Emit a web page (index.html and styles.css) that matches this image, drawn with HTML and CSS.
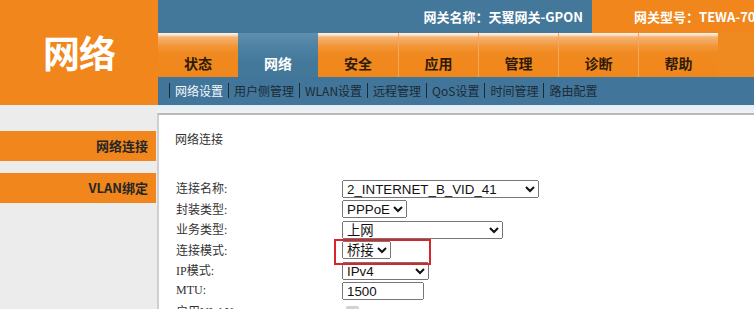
FILE: index.html
```html
<!DOCTYPE html>
<html lang="zh-CN">
<head>
    <meta charset="UTF-8">
    <meta name="viewport" content="width=device-width, initial-scale=1.0">
    <title>网络连接</title>
    <link rel="stylesheet" href="styles.css">
</head>
<body>
    <div class="header">
        <div class="logo">网络</div>
        <div class="head-main">
            <div class="top-bar">
                <div class="gw-name">网关名称：天翼网关-GPON</div>
                <div class="gw-model">网关型号：TEWA-708G</div>
            </div>
            <div class="tab-row">
                <div class="tabs">
                    <div class="tab">状态</div>
                    <div class="tab active">网络</div>
                    <div class="tab">安全</div>
                    <div class="tab">应用</div>
                    <div class="tab">管理</div>
                    <div class="tab">诊断</div>
                    <div class="tab">帮助</div>
                </div>
                <div class="tab-fill"></div>
            </div>
            <div class="sub-nav">
                <span class="current">网络设置</span>
                <span>用户侧管理</span>
                <span>WLAN设置</span>
                <span>远程管理</span>
                <span>QoS设置</span>
                <span>时间管理</span>
                <span>路由配置</span>
            </div>
        </div>
    </div>

    <div class="page">
        <div class="sidebar">
            <div class="side-item">网络连接</div>
            <div class="side-item">VLAN绑定</div>
        </div>
        <div class="right">
            <div class="edge"></div>
            <div class="content">
                <div class="title">网络连接</div>
                <div class="form">
                    <label>连接名称:</label>
                    <div><select class="w-name"><option>2_INTERNET_B_VID_41</option></select></div>
                    <label>封装类型:</label>
                    <div><select><option>PPPoE</option></select></div>
                    <label>业务类型:</label>
                    <div><select class="w-service"><option>上网</option></select></div>
                    <label>连接模式:</label>
                    <div class="marked"><select><option>桥接</option></select></div>
                    <label>IP模式:</label>
                    <div><select class="w-ip"><option>IPv4</option></select></div>
                    <label>MTU:</label>
                    <div><input type="text" class="w-mtu" value="1500"></div>
                    <label>启用VLAN:</label>
                    <div><input type="checkbox" class="chk" checked disabled></div>
                </div>
            </div>
        </div>
    </div>
</body>
</html>
```

FILE: styles.css
```css
* {
    margin: 0;
    padding: 0;
    box-sizing: border-box;
}

body {
    width: 754px;
    height: 309px;
    overflow: hidden;
    background-color: #ffffff;
    font-family: "Liberation Sans", "Noto Sans CJK SC", sans-serif;
}

.header {
    display: flex;
    height: 105px;
}

.logo {
    width: 158px;
    background-color: #f0861c;
    color: white;
    font-family: "Noto Sans CJK SC", sans-serif;
    font-size: 37px;
    font-weight: bold;
    display: flex;
    align-items: center;
    justify-content: center;
    letter-spacing: -1px;
    padding-bottom: 2px;
}

.head-main {
    flex: 1;
    display: flex;
    flex-direction: column;
}

.top-bar {
    height: 33px;
    display: flex;
    font-family: "Noto Sans CJK SC", sans-serif;
    font-size: 13px;
    font-weight: bold;
    color: white;
    line-height: 33px;
}

.gw-name {
    flex: 1;
    background-color: #44789a;
    text-align: right;
    padding-right: 9px;
    padding-bottom: 2px;
}

.gw-model {
    width: 162px;
    background-color: #f0861c;
    padding-left: 42px;
    white-space: nowrap;
    overflow: hidden;
}

.tab-row {
    height: 44px;
    display: flex;
    background-color: #44789a;
}

.tabs {
    width: 560px;
    display: flex;
}

.tab {
    width: 80px;
    text-align: center;
    font-family: "Noto Sans CJK SC", sans-serif;
    font-size: 14px;
    font-weight: bold;
    color: #2e1a06;
    padding-top: 20px;
    background: linear-gradient(to bottom, #fdf3ea 0px, #fbe2c8 2px, #f6b476 4px, #f29a3e 12px, #f0891f 20px, #f0871d 100%);
    border-left: 1px solid #f6a75a;
}

.tab:first-child {
    border-left: none;
}

.tab.active {
    background: linear-gradient(to bottom, #5e90b0 0px, #4f83a5 12px, #44789a 30px);
    color: #ffffff;
    border-left: none;
}

.tab.active + .tab {
    border-left: none;
}

.tab-fill {
    flex: 1;
    background-color: #ee8a20;
}

.sub-nav {
    height: 28px;
    background-color: #41769a;
    display: flex;
    align-items: center;
    padding-left: 11px;
    padding-bottom: 1px;
    font-family: "Noto Sans CJK SC", sans-serif;
    font-size: 12px;
    color: #1c2a36;
}

.sub-nav span {
    border-left: 1px solid #1c2a36;
    padding: 0 5px;
    line-height: 15px;
}

.sub-nav .current {
    color: #f2f6fa;
}

.page {
    display: flex;
    height: 204px;
}

.sidebar {
    width: 157px;
    background-color: #ececec;
    padding-top: 26px;
}

.side-item {
    width: 156px;
    height: 30px;
    margin-bottom: 12px;
    background-color: #f0861c;
    text-align: right;
    padding-right: 8px;
    line-height: 30px;
    font-family: "Noto Sans CJK SC", sans-serif;
    font-size: 13px;
    font-weight: bold;
    color: #262626;
}

.right {
    flex: 1;
    display: flex;
    flex-direction: column;
    min-height: 0;
}

.edge {
    flex-shrink: 0;
    height: 8px;
    background: linear-gradient(to bottom, #e3ecf3, #eef2f5);
}

.content {
    flex: 1;
    min-height: 0;
    overflow: hidden;
    background-color: white;
    border-top: 2px solid #b9b9b9;
    border-left: 2px solid #cfcfcf;
    padding: 16px 0 0 16px;
}

.title {
    font-family: "Noto Sans CJK SC", sans-serif;
    font-size: 12px;
    line-height: 16px;
    color: #333;
}

.form {
    margin-top: 31px;
    display: grid;
    grid-template-columns: 167px auto;
    grid-auto-rows: 20.5px;
    align-items: center;
}

.form label {
    font-family: "Liberation Serif", "Noto Sans CJK SC", serif;
    font-size: 12px;
    color: #333;
    padding-left: 1px;
}

.form select,
.form input[type="text"] {
    font-family: "Liberation Sans", "Noto Sans CJK SC", sans-serif;
    font-size: 13.333px;
    height: 18px;
    color: #111;
    vertical-align: middle;
}

.w-name {
    width: 197px;
}

.w-service {
    width: 161px;
}

.w-ip {
    width: 87px;
}

.w-mtu {
    width: 82px;
    padding: 0 3px;
}

.chk {
    margin-left: 4px;
    margin-top: 6px;
}

.marked {
    position: relative;
}

.marked::after {
    content: "";
    position: absolute;
    left: -8px;
    top: -1px;
    width: 93px;
    height: 22px;
    border: 2px solid #d6262c;
}
```
